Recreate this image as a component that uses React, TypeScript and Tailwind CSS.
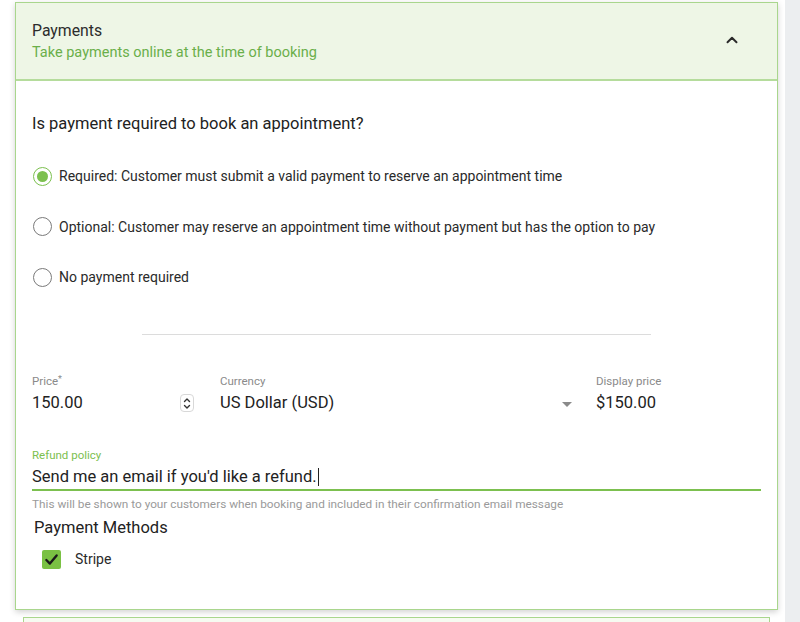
import { ChevronUp } from "lucide-react";

const RADIOS = [
  { label: "Required: Customer must submit a valid payment to reserve an appointment time", checked: true },
  { label: "Optional: Customer may reserve an appointment time without payment but has the option to pay", checked: false },
  { label: "No payment required", checked: false },
];

function Radio({ checked }: { checked: boolean }) {
  return (
    <span
      className={`w-[19px] h-[19px] rounded-full flex items-center justify-center shrink-0 border-[1.5px] ${
        checked ? "border-[#7cc04f]" : "border-[#7a7a7a]"
      }`}
    >
      {checked && <span className="w-[11px] h-[11px] rounded-full bg-[#7cc04f]" />}
    </span>
  );
}

export default function App() {
  return (
    <div
      className="w-[800px] h-[622px] overflow-hidden bg-white flex"
      style={{ fontFamily: "Roboto, 'Liberation Sans', sans-serif" }}
    >
      <div className="w-[785px] shrink-0">
        {/* Payments card */}
        <div className="ml-[15px] mt-[2px] w-[763px] h-[608px] border border-[#a9d68d] bg-white shadow-[0_2px_6px_rgba(0,0,0,0.18)]">
          {/* Header */}
          <div className="h-[78px] bg-[#eef6e6] border-b-2 border-[#b5dc9c] pl-[16px] pr-[36px] flex items-center justify-between">
            <div>
              <div className="text-[15.8px] leading-[20px] text-[#2c2c2c]">Payments</div>
              <div className="mt-[3px] text-[14.5px] leading-[18px] text-[#6aaf4a]">
                Take payments online at the time of booking
              </div>
            </div>
            <ChevronUp size={18} strokeWidth={2.6} className="text-[#2a2a2a] -mt-[2px]" />
          </div>

          {/* Body */}
          <div className="pl-[16px] pr-[16px]">
            <div className="pt-[31px] text-[16.5px] leading-[24px] text-[#222]">
              Is payment required to book an appointment?
            </div>

            <div className="mt-[30px] flex flex-col gap-[30.5px]">
              {RADIOS.map((r) => (
                <div key={r.label} className="flex items-center gap-[7px] h-[20px] pl-[1px]">
                  <Radio checked={r.checked} />
                  <span className="text-[14px] leading-[20px] text-[#2a2a2a]">{r.label}</span>
                </div>
              ))}
            </div>

            <div className="mt-[47px] ml-[110px] w-[509px] h-px bg-[#dcdcdc]" />

            {/* Price row */}
            <div className="mt-[39px] flex">
              <div className="w-[188px] flex items-end justify-between pr-[26px]">
                <div>
                  <div className="text-[11.5px] leading-[14px] text-[#8a8a8a]">
                    Price<span className="text-[9px] align-top relative -top-[2px]">*</span>
                  </div>
                  <div className="mt-[4px] text-[16.5px] leading-[22px] text-[#222]">150.00</div>
                </div>
                <span className="mb-[2px] w-[14px] h-[18px] rounded-[4px] border border-[#d8d8d8] flex flex-col items-center justify-center">
                  <svg width="8" height="13" viewBox="0 0 8 13" fill="none" stroke="#333" strokeWidth="1.4" strokeLinecap="round" strokeLinejoin="round">
                    <path d="M1.5 4.5 4 2l2.5 2.5" />
                    <path d="M1.5 8.5 4 11l2.5-2.5" />
                  </svg>
                </span>
              </div>
              <div className="w-[356px] flex items-end justify-between pr-[4px]">
                <div>
                  <div className="text-[11.5px] leading-[14px] text-[#8a8a8a]">Currency</div>
                  <div className="mt-[4px] text-[16.5px] leading-[22px] text-[#222]">US Dollar (USD)</div>
                </div>
                <svg width="10" height="5" viewBox="0 0 10 5" className="mb-[7px]">
                  <path d="M0 0h10L5 5z" fill="#8a8a8a" />
                </svg>
              </div>
              <div className="pl-[20px]">
                <div className="text-[11.5px] leading-[14px] text-[#8a8a8a]">Display price</div>
                <div className="mt-[4px] text-[16.5px] leading-[22px] text-[#222]">$150.00</div>
              </div>
            </div>

            {/* Refund policy */}
            <div className="mt-[34px] w-[729px]">
              <div className="text-[11.5px] leading-[14px] text-[#7cc04f]">Refund policy</div>
              <div className="mt-[4px] pb-[1px] border-b-2 border-[#7cc04f] text-[16.5px] leading-[22px] text-[#222] flex items-center">
                Send me an email if you'd like a refund.
                <span className="inline-block w-px h-[18px] bg-[#222] ml-[1px]" />
              </div>
              <div className="mt-[6px] text-[11.8px] leading-[14px] text-[#9a9a9a]">
                This will be shown to your customers when booking and included in their confirmation email message
              </div>
            </div>

            <div className="mt-[6px] ml-[2px] text-[16.5px] leading-[22px] text-[#222]">Payment Methods</div>

            <div className="mt-[10px] ml-[10px] flex items-center gap-[14px]">
              <span className="w-[19px] h-[19px] rounded-[2px] bg-[#7ac143] flex items-center justify-center">
                <svg width="15" height="15" viewBox="0 0 14 14" fill="none" stroke="#1a1a1a" strokeWidth="2.2" strokeLinecap="round" strokeLinejoin="round">
                  <path d="M2.2 7.5 5.5 10.8 11.8 3.2" />
                </svg>
              </span>
              <span className="text-[14px] leading-[20px] text-[#2a2a2a]">Stripe</span>
            </div>
          </div>
        </div>

        {/* Next collapsed card */}
        <div className="ml-[23px] mt-[7px] w-[747px] h-[20px] border border-[#a9d68d] bg-[#f6fbf1]" />
      </div>
      <div className="flex-1 bg-[#eceef0]" />
    </div>
  );
}
